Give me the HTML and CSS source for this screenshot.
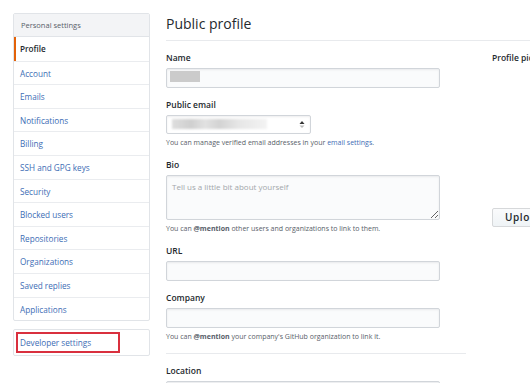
FILE: index.html
```html
<!DOCTYPE html>
<html lang="en">
<head>
    <meta charset="UTF-8">
    <meta name="viewport" content="width=device-width, initial-scale=1.0">
    <title>Your Profile</title>
    <link rel="stylesheet" href="styles.css">
</head>
<body>
    <div class="page">
        <aside class="sidebar">
            <nav class="menu">
                <h3 class="menu-heading">Personal settings</h3>
                <a href="#" class="menu-item selected">Profile</a>
                <a href="#" class="menu-item">Account</a>
                <a href="#" class="menu-item">Emails</a>
                <a href="#" class="menu-item">Notifications</a>
                <a href="#" class="menu-item">Billing</a>
                <a href="#" class="menu-item">SSH and GPG keys</a>
                <a href="#" class="menu-item">Security</a>
                <a href="#" class="menu-item">Blocked users</a>
                <a href="#" class="menu-item">Repositories</a>
                <a href="#" class="menu-item">Organizations</a>
                <a href="#" class="menu-item">Saved replies</a>
                <a href="#" class="menu-item">Applications</a>
            </nav>
            <nav class="menu">
                <a href="#" class="menu-item dev-item"><span class="marked">Developer settings</span></a>
            </nav>
        </aside>

        <main class="main">
            <div class="subhead">
                <h2>Public profile</h2>
            </div>

            <div class="columns">
                <form class="profile-form">
                    <div class="form-group">
                        <label>Name</label>
                        <div class="field"><span class="blur-name"></span></div>
                    </div>

                    <div class="form-group">
                        <label>Public email</label>
                        <div class="field select">
                            <span class="blur-email"></span>
                            <svg class="select-arrow" width="6" height="9" viewBox="0 0 6 9">
                                <path d="M0.5 4 L3 1 L5.5 4 Z" fill="#333"/>
                                <path d="M0.5 5.5 L3 8 L5.5 5.5 Z" fill="#bbb"/>
                            </svg>
                        </div>
                        <p class="note">You can manage verified email addresses in your <a href="#">email settings</a>.</p>
                    </div>

                    <div class="form-group">
                        <label>Bio</label>
                        <textarea class="field textarea" placeholder="Tell us a little bit about yourself"></textarea>
                        <p class="note">You can <b>@mention</b> other users and organizations to link to them.</p>
                    </div>

                    <div class="form-group">
                        <label>URL</label>
                        <input type="text" class="field">
                    </div>

                    <div class="form-group">
                        <label>Company</label>
                        <input type="text" class="field">
                        <p class="note">You can <b>@mention</b> your company's GitHub organization to link it.</p>
                    </div>

                    <hr>

                    <div class="form-group">
                        <label>Location</label>
                        <input type="text" class="field">
                    </div>
                </form>

                <div class="picture">
                    <label>Profile picture</label>
                    <div class="avatar"></div>
                    <button type="button" class="btn">Upload new picture</button>
                </div>
            </div>
        </main>
    </div>
</body>
</html>
```

FILE: styles.css
```css
body {
    margin: 0;
    background: #fff;
    font-family: 'Open Sans', sans-serif;
    color: #24292e;
    overflow: hidden;
}

.page {
    display: flex;
    gap: 16px;
    padding: 13px 0 0 13px;
}

.sidebar {
    width: 137px;
    flex: none;
}

.menu {
    border: 1px solid #e1e4e8;
    border-radius: 2px;
    background: #fff;
    margin-bottom: 8px;
}

.menu-heading {
    margin: 0;
    height: 22px;
    line-height: 22px;
    padding-left: 7px;
    font-size: 7.5px;
    font-weight: 400;
    color: #586069;
    background: #f3f4f6;
    border-bottom: 1px solid #e1e4e8;
}

.menu-item {
    display: block;
    box-sizing: border-box;
    height: 23.6px;
    line-height: 23px;
    padding-left: 6px;
    border-top: 1px solid #eaecef;
    color: #3d6db5;
    font-size: 8.2px;
    text-decoration: none;
}

.menu-heading + .menu-item,
.menu-item:first-child {
    border-top: none;
}

.menu-item.selected {
    border-left: 2px solid #e36209;
    padding-left: 4px;
    color: #24292e;
    font-weight: 600;
}

.dev-item {
    height: 25px;
    padding: 2px 0 0 2px;
    line-height: 17px;
}

.marked {
    display: block;
    width: 98px;
    height: 17px;
    padding-left: 2px;
    border: 2px solid #d9303e;
}

.main {
    flex: 1;
}

.subhead {
    padding: 1px 0 6px;
    border-bottom: 1px solid #e8eaed;
}

.subhead h2 {
    margin: 0;
    font-size: 14px;
    font-weight: 400;
    line-height: 20px;
}

.columns {
    display: flex;
    gap: 26px;
    padding-top: 11px;
}

.profile-form {
    width: 300px;
    flex: none;
}

.form-group {
    margin-bottom: 11px;
}

label {
    display: block;
    font-size: 8.5px;
    font-weight: 600;
    line-height: 12px;
    margin-bottom: 4px;
}

.field {
    display: block;
    box-sizing: border-box;
    width: 274px;
    height: 20px;
    margin: 0;
    padding: 2px 3px;
    background: #fafbfc;
    border: 1px solid #d1d5da;
    border-radius: 2px;
    box-shadow: inset 0 1px 2px rgba(27, 31, 35, 0.075);
    font-family: inherit;
    font-size: 8px;
    outline: none;
}

.blur-name {
    display: inline-block;
    width: 30px;
    height: 11px;
    background: #cbcbcb;
    filter: blur(0.6px);
}

.select {
    position: relative;
    width: 145px;
    height: 19px;
    background: #fff;
}

.blur-email {
    display: inline-block;
    width: 95px;
    height: 10px;
    margin: 1px 0 0 2px;
    background: linear-gradient(90deg, #dedede, #cfcfcf 20%, #e2e2e2 35%, #d3d3d3 50%, #e6e6e6 70%, #f3f3f3);
    filter: blur(0.8px);
}

.select-arrow {
    position: absolute;
    right: 5px;
    top: 4px;
}

.textarea {
    height: 45px;
    padding: 5px 5px;
    resize: vertical;
}

.textarea::placeholder {
    color: #a3a7ab;
}

.note {
    margin: 4px 0 0;
    font-size: 7px;
    line-height: 10px;
    color: #586069;
}

.note a {
    color: #3d6db5;
    text-decoration: none;
}

hr {
    height: 0;
    margin: 10px 0 11px;
    border: none;
    border-top: 1px solid #e8eaed;
}

.picture {
    flex: none;
}

.avatar {
    height: 128px;
    margin: 4px 0 8px;
}

.btn {
    height: 19px;
    padding: 0 12px;
    background: linear-gradient(#fafbfc, #eff3f6);
    border: 1px solid #d6d8da;
    border-radius: 2px;
    font-family: inherit;
    font-size: 10px;
    font-weight: 600;
    letter-spacing: 0.6px;
    color: #24292e;
    white-space: nowrap;
}
```
